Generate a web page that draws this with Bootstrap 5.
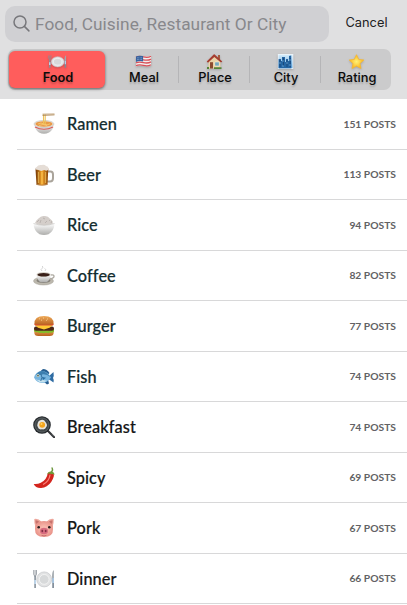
<!DOCTYPE html>
<html lang="en">
<head>
<meta charset="utf-8">
<meta name="viewport" content="width=device-width, initial-scale=1">
<title>Food search</title>
<link href="https://cdn.jsdelivr.net/npm/bootstrap@5.3.0/dist/css/bootstrap.min.css" rel="stylesheet">
<style>
body{width:407px;height:605px;overflow:hidden;background:#fff;font-family:Lato,sans-serif;color:#141616}
.top-panel{height:99px;background:#e0e0e1;padding:6px 0 0 5px}
.search-box{width:324px;height:35.5px;border-radius:10px;background:#d0d0d3;padding-left:8px;font:400 17.3px/34px Roboto,sans-serif;color:#88888c}
.search-box svg{width:17px;height:17px;margin-right:5px;flex:none}
.search-label{letter-spacing:.04px;white-space:nowrap}
.cancel{width:75px;font:400 12.8px/34px Inter,sans-serif;color:#202022}
.segments{width:383px;height:41px;margin:7px 0 0 3px;border-radius:7px;background:#cbcbcc;font:500 12.8px/14px Inter,sans-serif;color:#0b0b0b}
.segment{flex:none;width:71px;height:41px;padding-top:5px;position:relative;text-shadow:0 2px 2px #0003}
.segment svg{width:17px;height:15px;filter:drop-shadow(0 1px 1px #0003)}
.segment span{margin-top:2px;padding-left:1px}
.segment+.segment+.segment::before{content:"";position:absolute;left:-1px;top:7px;width:1px;height:27px;background:#b5b5b7}
.segment.selected{width:96px;height:37px;margin:2px 3px 0 1px;padding:3px 0 0 1px;border-radius:6px;background:#ff5d5c;box-shadow:0 1px 3px #0008;font-weight:600}
.segment.selected svg{width:19px}
.food-row{height:50.5px;margin-left:17px;padding:1px 11px 0 16px;border-bottom:1px solid #d8d8d9}
.food-row svg{width:22px;height:22px;margin-right:12px;flex:none}
.food-name{font-size:16.3px;font-weight:500;letter-spacing:.1px;-webkit-text-stroke:.2px}
.food-row.teal .food-name{color:#132d30}
.food-count{font-size:10.3px;font-weight:700;color:#626264}
</style>
</head>
<body>
<svg class="position-absolute" width="0" height="0">
<defs>
<linearGradient id="bowl" x2="0" y2="1"><stop stop-color="#fff"/><stop offset="1" stop-color="#adadab"/></linearGradient>
<linearGradient id="beer"><stop stop-color="#703404"/><stop offset=".5" stop-color="#f8a72a"/><stop offset="1" stop-color="#854006"/></linearGradient>
<linearGradient id="bun" x2="0" y2="1"><stop stop-color="#efaa59"/><stop offset="1" stop-color="#b96220"/></linearGradient>
<linearGradient id="sky" x2="0" y2="1"><stop stop-color="#d4ecfb"/><stop offset="1" stop-color="#5ea4dd"/></linearGradient>
<radialGradient id="star"><stop stop-color="#fff276"/><stop offset="1" stop-color="#f9b41b"/></radialGradient>
<radialGradient id="pig"><stop stop-color="#ffc9bd"/><stop offset="1" stop-color="#e9948a"/></radialGradient>
<symbol id="i-plate" viewBox="0 0 22 22">
<circle cx="11.2" cy="11.4" r="7.5" fill="#e1e2e3" stroke="#c4c6c8" stroke-width=".7"/><circle cx="11.2" cy="11.4" r="4.9" fill="#d7d9da" stroke="#f7f7f7" stroke-width=".8"/>
<path d="M.7 2v4.2q0 1.5 1.4 1.8 1.4-.3 1.4-1.8V2M2.1 2v7" fill="none" stroke="#8b9299" stroke-width=".8"/><path d="M2.1 8v12" stroke="#87919b" stroke-width="1.6"/><path d="M2.1 12v4" stroke="#c3def5" stroke-width="1.6"/>
<path d="M20.9 2c-2 1.5-2 6-1.7 9h1.7z" fill="#a1a8ae"/><path d="M20.1 10v10" stroke="#7f8b97" stroke-width="1.7"/><path d="M20.1 10v5" stroke="#afd0ef" stroke-width="1.5"/>
</symbol>
</defs>
</svg>

<header class="top-panel">
  <div class="d-flex">
    <div class="search-box d-flex align-items-center">
      <svg viewBox="0 0 17 17" fill="none" stroke="#77777b" stroke-width="1.5" stroke-linecap="round"><circle cx="7" cy="7" r="6"/><path d="m11.4 11.4 4.5 4.5"/></svg>
      <span class="search-label">Food, Cuisine, Restaurant Or City</span>
    </div>
    <div class="cancel text-center">Cancel</div>
  </div>
  <nav class="segments d-flex">
    <div class="segment selected d-flex flex-column align-items-center"><svg viewBox="0 0 22 22" preserveAspectRatio="none"><use href="#i-plate"/></svg><span>Food</span></div>
    <div class="segment d-flex flex-column align-items-center">
      <svg viewBox="0 0 17 15"><path d="M1 2.5q3-1.4 7.4-.3 4.4 1 7.6-.6v9.9q-3 1.5-7.6.4Q4 10.800 1 12.400z" fill="#f2eeee"/><path d="M1 3.200q3-1.400 7.400-.3T16 2.200M1 6.100q3-1.400 7.400-.3T16 5.100M1 8.900q3-1.400 7.400-.3T16 7.900M1 11.700q3-1.400 7.400-.3T16 10.700" fill="none" stroke="#d85058" stroke-width="1.300"/><path d="M1 2.500q3-1.400 7.100-.4v5.300Q4 6.600 1 7.900z" fill="#37639f"/><path d="M2 3.800h5M2 5.500h5" stroke="#b8cae5" stroke-width=".6" stroke-dasharray=".7 .7"/></svg><span>Meal</span></div>
    <div class="segment d-flex flex-column align-items-center">
      <svg viewBox="0 0 17 15"><path d="M12 1h2v5h-2z" fill="#a45d3e"/><path d="M2.500 7 8 2l6.500 5v7.500h-12z" fill="#e9d3a8"/><path d="M.7 7.600 7.700.500q.5-.5 1 0l7.600 7-1.300 1L8.300 2.900 2 8.800z" fill="#a63d30"/><path d="M4 8.200h3v6.300H4z" fill="#8b4b30"/><path d="M9 8h4v4H9z" fill="#4d93b8" stroke="#fff5d9" stroke-width=".6"/><path d="M11 8v4" stroke="#f6e8c9" stroke-width=".5"/><path d="M1 13h2v2H1zM8 13.200h7.500V15H8z" fill="#548536"/></svg><span>Place</span></div>
    <div class="segment d-flex flex-column align-items-center">
      <svg viewBox="0 0 17 15"><path d="M.8 0h15.500v15H.8z" fill="#eef5fa"/><path d="M1.600.8h13.900v13.400H1.600z" fill="url(#sky)"/><path d="M1.600 5H4v2h1V3h3v5h1V5h2v2h1V2l2.200-.5v12.700H1.600z" fill="#2465a3"/><path d="M3 6v7M6.500 4v8M10 6v7M13.200 4v9" stroke="#174372" stroke-width=".8"/><path d="M2 9h2M5 7h2M9 9h2M12 6h2M5 12h2M12 11h2" stroke="#79b6e3" stroke-width=".7"/></svg><span>City</span></div>
    <div class="segment d-flex flex-column align-items-center">
      <svg viewBox="0 0 17 15"><path d="m8.500.7 2.200 4.700 5.100.6-3.800 3.500 1 5-4.500-2.500L4 14.500l1-5L1.200 6l5.100-.6z" fill="url(#star)" stroke="#f7b72e" stroke-width=".8" stroke-linejoin="round"/></svg><span>Rating</span></div>
  </nav>
</header>

<main>
  <div class="food-row teal d-flex align-items-center">
    <svg viewBox="0 0 22 22"><path d="M1 11q1 6 5 8.500 5 2.500 10 0 4.500-2.500 5-8.500z" fill="url(#bowl)"/><ellipse cx="11" cy="11" rx="10" ry="3.600" fill="#e9e5df" stroke="#b9b6b1" stroke-width=".5"/><ellipse cx="11" cy="11" rx="8.600" ry="2.700" fill="#e99a48"/><path d="M5 11q3-2 6 0t6-.2M6 12.500q4-2 8 0" fill="none" stroke="#f9cf75" stroke-width=".8"/><path d="M2 14q9 4.500 18 0" fill="none" stroke="#d85b58" stroke-width="1.200"/><path d="M10.500 1.500V11M12.200 1.500V11" stroke="#ecc35a" stroke-width="1.100"/><path d="m9.500 1.200 12-.2M9.500 2.500l12-.6" stroke="#ad8653" stroke-width=".8"/></svg>
    <span class="food-name">Ramen</span><span class="food-count ms-auto">151 POSTS</span>
  </div>
  <div class="food-row teal d-flex align-items-center">
    <svg viewBox="0 0 22 22"><path d="M14 7.500h3.500q2.500 0 2.500 3v3.800q0 3.200-3 3.200h-3" fill="none" stroke="#aaa49b" stroke-width="2"/><path d="M2.500 4.500h12.800l-.8 16.300q-5.500 1.500-11 0z" fill="url(#beer)"/><path d="M5.500 8v11M9 8v12M12.500 8v11" stroke="#ffdc75" stroke-width="1.200" opacity=".55"/><path d="M2.200 5.500q-.5-2 1.500-2.500Q5 .5 8.500 1q3-1 4.500 1 2.500.2 2.500 2.500l-.3 1.500-2 .8-2-.9-3 1-2.700-.8z" fill="#e5ddd6"/><path d="M3.500 20.500q5.500 1.500 11 0" fill="none" stroke="#b68c62" stroke-width=".8"/></svg>
    <span class="food-name">Beer</span><span class="food-count ms-auto">113 POSTS</span>
  </div>
  <div class="food-row teal d-flex align-items-center">
    <svg viewBox="0 0 22 22"><path d="M2 9q1-3 3.500-4.500Q8 1.500 11 2q4-.5 6 2.700Q19.500 6 20 9.500l-9 4z" fill="#d4ceca"/><path d="m4 8 2-2m1 3 1-3m2-2 2 1m0 4 2-2m2-1 1 1m1 2 1-2" stroke="#aaa39f" stroke-width=".6"/><path d="M.5 9.500q10.500 3.500 21 0-.3 7.500-6 10.800-4.500 1.500-9 0Q.8 17 .5 9.500z" fill="url(#bowl)"/><path d="M.5 9.500q10.500 3.500 21 0" fill="none" stroke="#c5c4c2" stroke-width=".7"/></svg>
    <span class="food-name">Rice</span><span class="food-count ms-auto">94 POSTS</span>
  </div>
  <div class="food-row teal d-flex align-items-center">
    <svg viewBox="0 0 22 22"><ellipse cx="10.500" cy="16" rx="10" ry="4" fill="#bdb9ae" stroke="#8f8b82" stroke-width=".4"/><ellipse cx="10.500" cy="15.500" rx="7" ry="2.500" fill="#858179"/><path d="M17.500 10q4-.8 3.500 1.800-.7 2-4.500 2.200" fill="none" stroke="#aeaaa2" stroke-width="1.300"/><path d="M3.500 9.500q.5 6 4.300 7.800h5.700q3.800-2 4.200-7.800z" fill="url(#bowl)"/><ellipse cx="10.600" cy="9.400" rx="7.100" ry="2.500" fill="#d8d4cb"/><ellipse cx="10.600" cy="9.700" rx="6.100" ry="1.800" fill="#392019"/><path d="M9 6q-2-1.500.2-2.700Q11 2 9 1m3 5q1.500-1.500-.3-2.600" fill="none" stroke="#c9c9c9" stroke-width=".8"/></svg>
    <span class="food-name">Coffee</span><span class="food-count ms-auto">82 POSTS</span>
  </div>
  <div class="food-row teal d-flex align-items-center">
    <svg viewBox="0 0 22 22"><path d="M1.300 14.500h19.400v3q0 3.500-4 3.500H5.300q-4 0-4-3.500z" fill="url(#bun)"/><path d="M1 13.500q2 2 3.500.8 2 2 4 .4 2 1.500 4 .2 2 1.700 4-.3 2 1 4.500-1v3q-2 2-4 .8-2 1.500-4 .2-2 1.200-4 .1-2 1-4-.5-2 .6-4-1z" fill="#83bd2c"/><rect x="1" y="11.500" width="20" height="4.200" rx="2" fill="#4b2719"/><path d="M1.500 9.800h19l-4 3-5.500 1.700L5 12.700z" fill="#ffc934"/><rect x="1.500" y="8" width="19" height="2.500" rx="1.200" fill="#d94c36"/><path d="M1.500 9Q1 1 11 1t9.500 8q-9.500 1.700-19 0z" fill="url(#bun)"/><path d="m6 4 1-.3m3-.7 1 .1m3 .7 1 .4m-7 1 1-.1m4 .2.9.1" stroke="#ffe2a5" stroke-width=".7"/></svg>
    <span class="food-name">Burger</span><span class="food-count ms-auto">77 POSTS</span>
  </div>
  <div class="food-row teal d-flex align-items-center">
    <svg viewBox="0 0 22 22"><path d="m7 5.500 3-2.500q4 0 6.500 4l-2 2zM10 15l4 3.500 2-1-1-4z" fill="#285f91"/><path d="M15.500 10.500 20.500 6q.7 4-.5 6 1.500 2.500.5 4.500l-5-3.500z" fill="#2f6ca3"/><path d="M1 11.500Q3 5 9 5q5.500.3 9 6.500-4 5.500-9 5.500-5.500-.3-8-5.500z" fill="#78b5df"/><path d="M3 8.500Q8 2.500 13.500 7l4.500 4.500q-5-4-9-3T3 8.500z" fill="#3c7eae"/><path d="M2.300 12.800Q6 15 10 14l4 .8Q8 19 2.300 12.800z" fill="#c5e1ed"/><path d="M8 8q2 3.500-.3 7" fill="none" stroke="#326b99" stroke-width=".9"/><circle cx="5" cy="9.700" r="1.400" fill="#f3eec4"/><circle cx="5" cy="9.700" r=".8" fill="#1a3345"/><path d="m9 11 4 .8-3 2.200z" fill="#286ca0"/></svg>
    <span class="food-name">Fish</span><span class="food-count ms-auto">74 POSTS</span>
  </div>
  <div class="food-row d-flex align-items-center">
    <svg viewBox="0 0 22 22"><path d="m15 15 6.200 6.200" stroke="#35373a" stroke-width="2.200" stroke-linecap="round"/><path d="m19 18.200 2.200 2.200" stroke="#8d9193" stroke-width=".7"/><circle cx="9" cy="9" r="8.800" fill="#25292c"/><circle cx="9" cy="9" r="7.100" fill="#414749" stroke="#6c7476" stroke-width=".7"/><path d="M4.500 8Q5 4.500 8 4q3-.8 4.500 2 2.500 3 .8 5-1 3-4.300 2.300-3.500.8-4.200-2.300-1-1.500-.3-3z" fill="#e8e4dc"/><circle cx="9.200" cy="8.800" r="2.900" fill="#f5a51b"/><circle cx="8.500" cy="8" r="1" fill="#ffd267"/></svg>
    <span class="food-name">Breakfast</span><span class="food-count ms-auto">74 POSTS</span>
  </div>
  <div class="food-row d-flex align-items-center">
    <svg viewBox="0 0 22 22"><path d="M14.800 6q-1 7-7 9.700Q4.500 17.500.7 17q2 4.300 7.500 3.900 6-.4 10-6Q22 9 20.500 6.500q-3-2-5.700-.5z" fill="#d3251e"/><path d="M17 8q-.8 6-6.500 9.300" fill="none" stroke="#fa837b" stroke-width="1.200" stroke-linecap="round"/><path d="M14.200 7.700q.7-3.200 3.600-3.200 3.800.2 3.600 3.500-1.500-1.800-3-.7-2-1.700-4.200.4z" fill="#729d39"/><path d="M18.300 5q2-1.500.8-4" fill="none" stroke="#6b963c" stroke-width="1.400" stroke-linecap="round"/></svg>
    <span class="food-name">Spicy</span><span class="food-count ms-auto">69 POSTS</span>
  </div>
  <div class="food-row d-flex align-items-center">
    <svg viewBox="0 0 22 22"><path d="M2.500 10Q1 5 1.300 2q4-.8 7 2.500zM19.500 10Q21 5 20.700 2q-4-.8-7 2.500z" fill="#eda69b"/><path d="M3 7q-.7-2-.5-3.700Q5 3.500 6.500 5zM19 7q.7-2 .5-3.700Q17 3.500 15.500 5z" fill="#c8736d"/><path d="M2 12Q2 4 11 4t9 8q.3 8-9 8T2 12z" fill="url(#pig)"/><ellipse cx="11" cy="14" rx="4" ry="3.200" fill="#d76c7f"/><ellipse cx="9.300" cy="14" rx=".9" ry="1.300" fill="#813045"/><ellipse cx="12.700" cy="14" rx=".9" ry="1.300" fill="#813045"/><circle cx="5.700" cy="10.300" r="1.300" fill="#282020"/><circle cx="16.300" cy="10.300" r="1.300" fill="#282020"/><path d="M8.500 18.300q2.500 1.200 5 0" fill="none" stroke="#b65b62" stroke-width=".7"/></svg>
    <span class="food-name">Pork</span><span class="food-count ms-auto">67 POSTS</span>
  </div>
  <div class="food-row d-flex align-items-center">
    <svg viewBox="0 0 22 22"><use href="#i-plate"/></svg>
    <span class="food-name">Dinner</span><span class="food-count ms-auto">66 POSTS</span>
  </div>
</main>
<script src="https://cdn.jsdelivr.net/npm/bootstrap@5.3.0/dist/js/bootstrap.bundle.min.js"></script>
</body>
</html>
